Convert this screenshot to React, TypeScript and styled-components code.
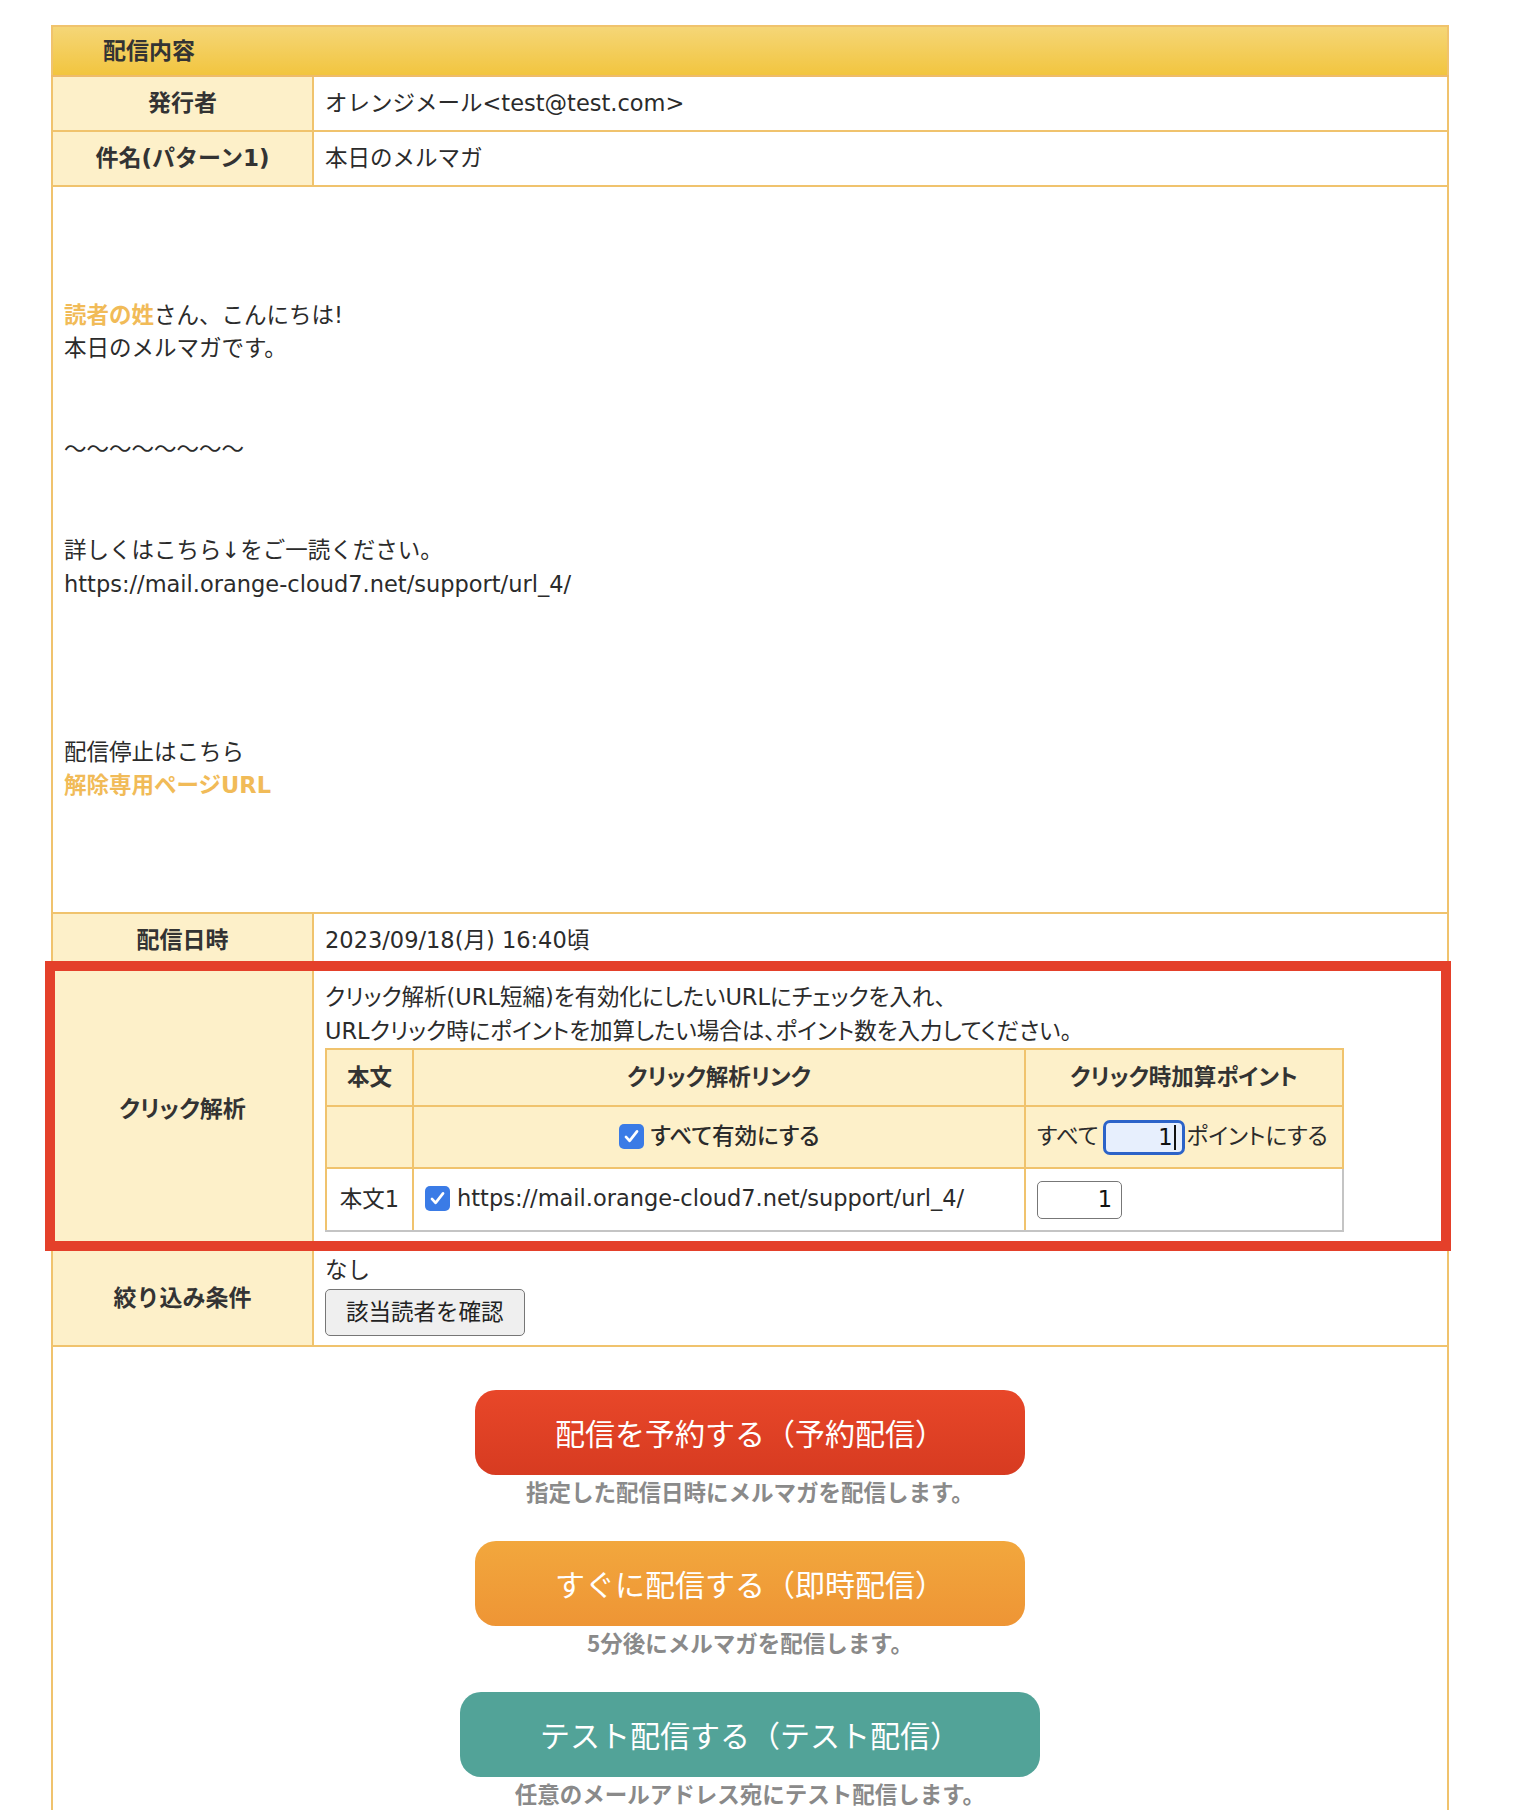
import React from 'react';
import styled, { createGlobalStyle } from 'styled-components';

const LINE = '#f0c36d';
const LABEL_BG = '#fdf0c9';
const ACCENT = '#f1bb58';

const GlobalStyle = createGlobalStyle`
  body {
    margin: 0;
    background: #fff;
    color: #2b2b2b;
    font-family: 'DejaVu Sans', 'Noto Sans CJK JP', sans-serif;
    font-size: 22.5px;
    line-height: 33px;
  }
  * {
    box-sizing: border-box;
  }
`;

const Page = styled.div`
  padding: 25px 0 0 51px;
  width: 1449px;
`;

const Sheet = styled.table`
  width: 1398px;
  border-collapse: collapse;
  border: 2px solid ${LINE};
`;

const SheetHead = styled.th`
  height: 50px;
  padding: 0 50px;
  text-align: left;
  font-size: 23px;
  font-weight: bold;
  color: #333;
  background: linear-gradient(#f5d677, #f2c53f);
  border-bottom: 2px solid #eebb6c;
`;

const Label = styled.th<{ $anchor?: boolean }>`
  position: ${(p) => (p.$anchor ? 'relative' : 'static')};
  width: 261px;
  padding: 10px;
  text-align: center;
  font-size: 23px;
  font-weight: bold;
  color: #333;
  background: ${LABEL_BG};
  border: 2px solid ${LINE};
`;

const Tight = styled.span`
  font-feature-settings: 'palt';
`;

const Value = styled.td<{ $pad?: string }>`
  padding: ${(p) => p.$pad || '10px 11px'};
  text-align: left;
  vertical-align: middle;
  background: #fff;
  border: 2px solid ${LINE};
`;

const BodyCell = styled.td`
  padding: 11px 11px 9px;
  vertical-align: top;
  border: 2px solid ${LINE};
`;

const BodyLine = styled.div`
  min-height: 33.6px;
  line-height: 33.6px;
`;

const Accent = styled.span`
  color: ${ACCENT};
  font-weight: bold;
`;

const Highlight = styled.span`
  position: absolute;
  top: -8px;
  left: -8px;
  bottom: -2px;
  width: 1406px;
  border: 10px solid #e4402a;
  pointer-events: none;
  z-index: 2;
`;

const Note = styled.p`
  margin: 0;
  line-height: 34px;
  font-feature-settings: 'palt';
`;

const LinkTable = styled.table`
  border-collapse: collapse;
  font-feature-settings: 'palt';
`;

const LinkHead = styled.th<{ $w: number }>`
  width: ${(p) => p.$w}px;
  height: 57px;
  padding: 0 11px;
  text-align: center;
  font-weight: bold;
  color: #333;
  background: ${LABEL_BG};
  border: 2px solid ${LINE};
`;

const LinkCell = styled.td<{ $tone: 'yellow' | 'white'; $align?: string; $last?: boolean }>`
  height: ${(p) => (p.$tone === 'yellow' ? 62 : 63)}px;
  padding: 0 11px;
  text-align: ${(p) => p.$align || 'left'};
  white-space: nowrap;
  background: ${(p) => (p.$tone === 'yellow' ? LABEL_BG : '#fff')};
  border: 2px solid ${LINE};
  border-bottom-color: ${(p) => (p.$tone === 'white' ? '#c4c4c4' : LINE)};
  border-right-color: ${(p) => (p.$last && p.$tone === 'white' ? '#c4c4c4' : LINE)};
`;

const CheckLabel = styled.label<{ $strong?: boolean }>`
  display: inline-flex;
  align-items: center;
  gap: 7px;
  font-weight: ${(p) => (p.$strong ? 500 : 400)};
`;

const CheckBox = styled.span`
  display: inline-flex;
  align-items: center;
  justify-content: center;
  width: 25px;
  height: 25px;
  border-radius: 5px;
  background: #3a7be6;
  svg {
    width: 19px;
    height: 19px;
  }
`;

const FocusField = styled.span`
  display: inline-flex;
  align-items: center;
  justify-content: flex-end;
  vertical-align: middle;
  width: 82px;
  height: 35px;
  margin: 0 2px 0 4px;
  padding: 0 6px;
  border: 3px solid #2c63c8;
  border-radius: 7px;
  background: #e7effd;
  color: #111;
`;

const Caret = styled.span`
  display: inline-block;
  width: 2px;
  height: 25px;
  margin-left: 1px;
  background: #111;
`;

const PointField = styled.span`
  display: inline-flex;
  align-items: center;
  justify-content: flex-end;
  width: 85px;
  height: 38px;
  padding: 0 9px;
  border: 1.5px solid #777;
  border-radius: 5px;
  color: #111;
`;

const GrayButton = styled.button`
  display: block;
  height: 47px;
  margin-top: 2px;
  padding: 0 20px;
  font: inherit;
  color: #222;
  background: #efefef;
  border: 1.5px solid #767676;
  border-radius: 5px;
`;

const ActionCell = styled.td`
  padding: 43px 0 40px;
  text-align: center;
  border: 2px solid ${LINE};
  border-bottom: none;
`;

const ActionBlock = styled.div`
  display: flex;
  flex-direction: column;
  align-items: center;
  margin-bottom: 33px;
`;

const tones = {
  red: 'linear-gradient(#e84729, #d73b21)',
  orange: 'linear-gradient(#f2a73d, #ee9535)',
  teal: '#52a398',
};

const ActionButton = styled.button<{ $tone: keyof typeof tones }>`
  height: 85px;
  padding: 0 80px;
  font-family: 'Noto Sans CJK JP', sans-serif;
  font-size: 30px;
  line-height: 45px;
  color: #fff;
  background: ${(p) => tones[p.$tone]};
  border: none;
  border-radius: 21px;
`;

const Caption = styled.div`
  font-family: 'Noto Sans CJK JP', sans-serif;
  font-weight: bold;
  color: #8a8a8a;
  line-height: 33px;
`;

const Check = () => (
  <CheckBox>
    <svg viewBox="0 0 24 24" fill="none" stroke="#fff" strokeWidth="3.4" strokeLinecap="round" strokeLinejoin="round">
      <path d="M5 12.5l4.6 5L19 5.5" />
    </svg>
  </CheckBox>
);

const bodyLines: React.ReactNode[] = [
  '',
  '',
  '',
  <>
    <Accent>読者の姓</Accent>さん、こんにちは!
  </>,
  '本日のメルマガです。',
  '',
  '',
  '～～～～～～～～',
  '',
  '',
  '詳しくはこちら↓をご一読ください。',
  'https://mail.orange-cloud7.net/support/url_4/',
  '',
  '',
  '',
  '',
  '配信停止はこちら',
  <Accent>解除専用ページURL</Accent>,
  '',
  '',
  '',
];

const actions = [
  { tone: 'red' as const, label: '配信を予約する（予約配信）', note: '指定した配信日時にメルマガを配信します。' },
  { tone: 'orange' as const, label: 'すぐに配信する（即時配信）', note: '5分後にメルマガを配信します。' },
  { tone: 'teal' as const, label: 'テスト配信する（テスト配信）', note: '任意のメールアドレス宛にテスト配信します。' },
];

const App: React.FC = () => {
  return (
    <Page>
      <GlobalStyle />
      <Sheet>
        <thead>
          <tr>
            <SheetHead colSpan={2}>配信内容</SheetHead>
          </tr>
        </thead>
        <tbody>
          <tr>
            <Label>発行者</Label>
            <Value>オレンジメール&lt;test@test.com&gt;</Value>
          </tr>
          <tr>
            <Label>件名(パターン1)</Label>
            <Value>本日のメルマガ</Value>
          </tr>
          <tr>
            <BodyCell colSpan={2}>
              {bodyLines.map((line, i) => (
                <BodyLine key={i}>{line}</BodyLine>
              ))}
            </BodyCell>
          </tr>
          <tr>
            <Label>配信日時</Label>
            <Value>2023/09/18(月) 16:40頃</Value>
          </tr>
          <tr>
            <Label $anchor>
              <Tight>クリック解析</Tight>
              <Highlight />
            </Label>
            <Value $pad="11px 11px 17px">
              <Note>クリック解析(URL短縮)を有効化にしたいURLにチェックを入れ、</Note>
              <Note>URLクリック時にポイントを加算したい場合は、ポイント数を入力してください。</Note>
              <LinkTable>
                <thead>
                  <tr>
                    <LinkHead $w={87}>本文</LinkHead>
                    <LinkHead $w={612}>クリック解析リンク</LinkHead>
                    <LinkHead $w={318}>クリック時加算ポイント</LinkHead>
                  </tr>
                </thead>
                <tbody>
                  <tr>
                    <LinkCell $tone="yellow" />
                    <LinkCell $tone="yellow" $align="center">
                      <CheckLabel $strong>
                        <Check />
                        すべて有効にする
                      </CheckLabel>
                    </LinkCell>
                    <LinkCell $tone="yellow">
                      すべて
                      <FocusField>
                        1<Caret />
                      </FocusField>
                      ポイントにする
                    </LinkCell>
                  </tr>
                  <tr>
                    <LinkCell $tone="white" $align="center">本文1</LinkCell>
                    <LinkCell $tone="white">
                      <CheckLabel>
                        <Check />
                        https://mail.orange-cloud7.net/support/url_4/
                      </CheckLabel>
                    </LinkCell>
                    <LinkCell $tone="white" $last>
                      <PointField>1</PointField>
                    </LinkCell>
                  </tr>
                </tbody>
              </LinkTable>
            </Value>
          </tr>
          <tr>
            <Label>絞り込み条件</Label>
            <Value $pad="3px 11px 9px">
              なし
              <GrayButton>該当読者を確認</GrayButton>
            </Value>
          </tr>
          <tr>
            <ActionCell colSpan={2}>
              {actions.map((a) => (
                <ActionBlock key={a.tone}>
                  <ActionButton $tone={a.tone}>{a.label}</ActionButton>
                  <Caption>{a.note}</Caption>
                </ActionBlock>
              ))}
            </ActionCell>
          </tr>
        </tbody>
      </Sheet>
    </Page>
  );
};

export default App;
